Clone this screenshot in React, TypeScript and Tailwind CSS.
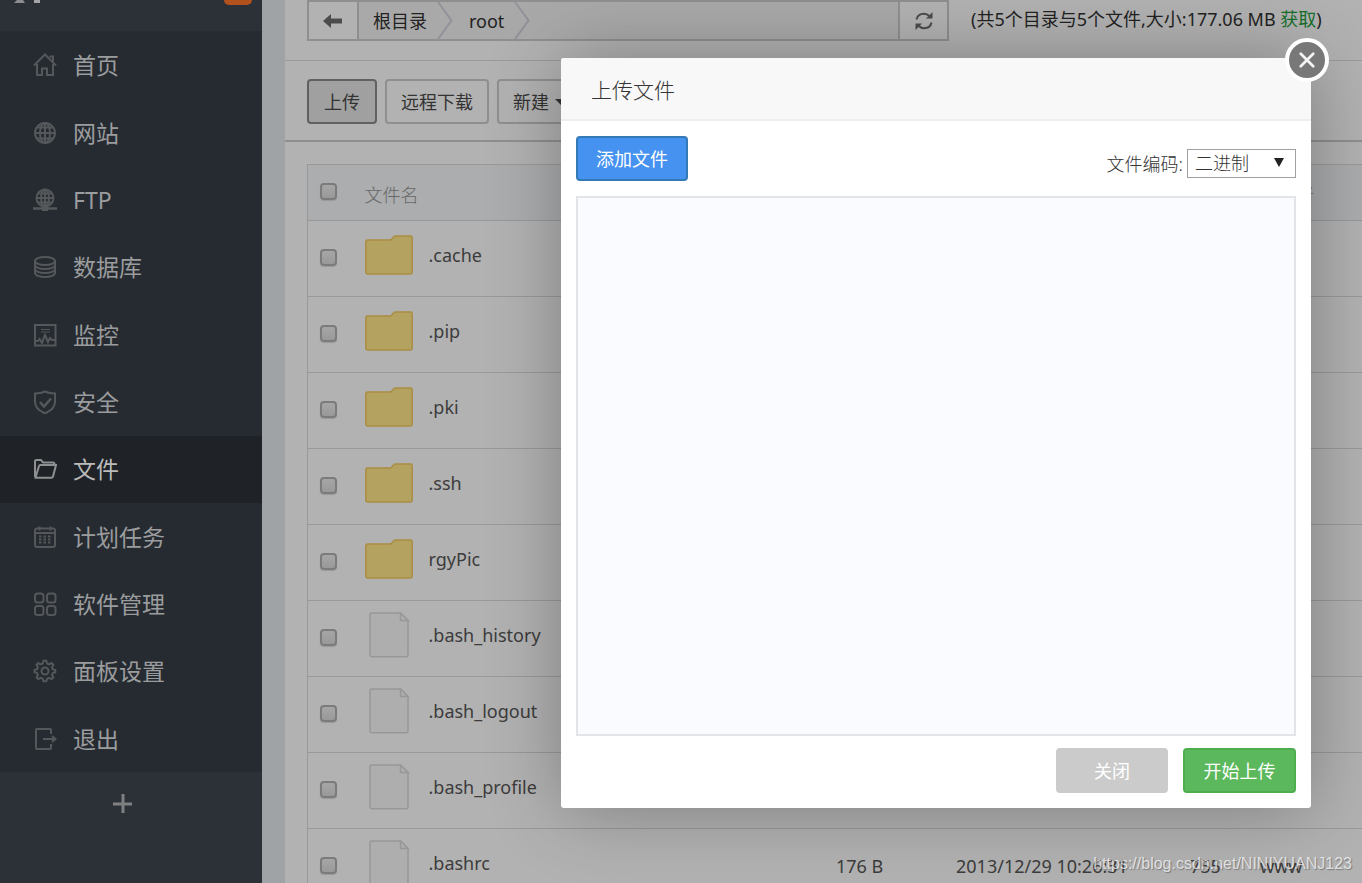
import React from "react";

const icons: Record<string, React.ReactNode> = {
  home: (
    <>
      <path d="M1 12.500 12 1.500l11 11" />
      <path d="M16.500 3.500h3.500v5" />
      <path d="M4 11v11h5v-6.500h5V22h6V11" />
    </>
  ),
  globe: (
    <>
      <circle cx="12" cy="12" r="10" />
      <ellipse cx="12" cy="12" rx="5" ry="10" />
      <path d="M12 2v20M2 12h20M4 6.500h16M4 17.500h16" />
    </>
  ),
  ftp: (
    <>
      <circle cx="12" cy="10" r="8.500" />
      <ellipse cx="12" cy="10" rx="4" ry="8.500" />
      <path d="M12 1.500v17M3.500 10h17M5 5.500h14M5 14.500h14" />
      <path d="M0 20.500h24" strokeWidth="2.500" />
      <path d="M9 20.500h6" strokeWidth="5" />
    </>
  ),
  database: (
    <>
      <ellipse cx="12" cy="6" rx="10" ry="4" />
      <path d="M2 6v12c0 2.200 4.500 4 10 4s10-1.800 10-4V6" />
      <path d="M2 10c0 2.200 4.500 4 10 4s10-1.800 10-4M2 14c0 2.200 4.500 4 10 4s10-1.800 10-4" />
    </>
  ),
  monitor: (
    <>
      <path d="M2 2h20.500v20.500H2z" />
      <path d="M8 6.500h9M8 9h9" strokeWidth="1" />
      <path d="M2 18h3l1.500-2L9 20l3-8 3 7 2-4 2 2h3" />
    </>
  ),
  shield: (
    <>
      <path d="M12 1.500C9 3 5.500 3.500 2 3.500V12c0 5.500 4.500 9 10 11.500C17.500 21 22 17.500 22 12V3.500c-3.500 0-7-.5-10-2z" />
      <path d="m7 12 4 4.500 7-8" strokeWidth="2.500" />
    </>
  ),
  folder: (
    <>
      <path d="M2 20V4.500C2 3.500 2.500 3 3.500 3H8l2 2.500h10c1 0 1.500.5 1.500 1.500v1" />
      <path d="M2.500 20.500 6 9c.2-.8.600-1 1.500-1H23l-3 11.500c-.2.800-.7 1.200-1.500 1.200h-16z" />
    </>
  ),
  calendar: (
    <>
      <rect x="2" y="3.500" width="20" height="18.500" rx="2" />
      <path d="M2 8h20M6.500 1.500v4M17.500 1.500v4" />
      <path d="M6 11.500h13M6 14.500h13M6 17.500h13" strokeDasharray="2.500 2" />
    </>
  ),
  grid: (
    <>
      <rect x="2" y="1.500" width="8.500" height="9" rx="2.500" />
      <rect x="14" y="1.500" width="8.500" height="9" rx="2.500" />
      <rect x="2" y="14" width="8.500" height="9" rx="2.500" />
      <rect x="14" y="14" width="8.500" height="9" rx="2.500" />
    </>
  ),
  gear: (
    <>
      <circle cx="12" cy="12" r="3.500" />
      <path d="m10.500 1.800-.8 2.700-2 .8-2.500-1.300-1.600 1.700 1.300 2.500-.8 2-2.500.8v2.200l2.500.8.8 2-1.300 2.500 1.600 1.600 2.500-1.200 2 .8.8 2.600h2.800l.8-2.600 2-.8 2.500 1.200 1.700-1.600-1.300-2.500.8-2 2.500-.8v-2.200l-2.500-.8-.8-2 1.300-2.500-1.700-1.700-2.500 1.300-2-.8-.8-2.700z" />
    </>
  ),
  exit: (
    <path d="M18 7V3c0-.7-.3-1-1-1H4c-.7 0-1 .3-1 1v18c0 .7.300 1 1 1h13c.7 0 1-.3 1-1v-4M10 12h12M19 9l3.500 3-3.500 3" />
  ),
};

const menu = [
  { icon: "home", label: "首页" },
  { icon: "globe", label: "网站" },
  { icon: "ftp", label: "FTP" },
  { icon: "database", label: "数据库" },
  { icon: "monitor", label: "监控" },
  { icon: "shield", label: "安全" },
  { icon: "folder", label: "文件", active: true },
  { icon: "calendar", label: "计划任务" },
  { icon: "grid", label: "软件管理" },
  { icon: "gear", label: "面板设置" },
  { icon: "exit", label: "退出" },
];

const files = [
  { name: ".cache", dir: true },
  { name: ".pip", dir: true },
  { name: ".pki", dir: true },
  { name: ".ssh", dir: true },
  { name: "rgyPic", dir: true },
  { name: ".bash_history" },
  { name: ".bash_logout" },
  { name: ".bash_profile" },
  {
    name: ".bashrc",
    size: "176 B",
    time: "2013/12/29 10:26:31",
    mode: "755",
    owner: "www",
  },
];

const FolderIcon = () => (
  <svg width="48" height="40" viewBox="0 0 48 40" aria-hidden="true">
    <path
      d="M2.500 5H25c2 0 3-4 5.500-4H45.500c1 0 1.700.7 1.700 1.700V37.300c0 1-.7 1.700-1.700 1.700H2.500C1.500 39 .8 38.300.8 37.300V6.700C.8 5.700 1.500 5 2.500 5z"
      fill="#b3a260"
      stroke="#ab8d43"
      strokeWidth="1.500"
    />
  </svg>
);

const FileIcon = () => (
  <svg width="48" height="46" viewBox="0 0 48 46" aria-hidden="true">
    <g fill="#aeaeae" stroke="#989898" strokeWidth="1.500">
      <path d="M6.500 1H35.500l7.500 7.500V43c0 1-.6 1.700-1.600 1.700H6.500C5.500 44.700 5 44 5 43V2.600C5 1.600 5.500 1 6.500 1z" />
      <path d="M35.500 1v7.500H43z" />
    </g>
  </svg>
);

const Check = ({ label }: { label: string }) => (
  <input
    type="checkbox"
    aria-label={label}
    className="block size-[17px] appearance-none rounded-[4px] border-2 border-[#7b7b7b] bg-linear-to-b from-[#a6a6a6] to-[#999999] shadow-[0_1px_1px_#999]"
  />
);

const Chevron = () => (
  <svg width="16" height="37" viewBox="0 0 16 37" fill="none" aria-hidden="true">
    <path d="M1 0l13.500 18.500L1 37" stroke="#92929a" strokeWidth="2" />
  </svg>
);

const Sidebar = () => {
  return (
    <aside className="w-[262px] shrink-0 bg-[#2c3037]">
      <div className="flex h-[31px] items-start justify-between pl-3.5 pr-2.5">
        <svg width="28" height="3" viewBox="0 0 28 3" aria-hidden="true">
          <path d="M3 0h6l2 3H0z" fill="#8b8d90" />
          <path d="M20 0h6v3h-6z" fill="#a5a6a8" />
        </svg>
        <span className="h-[5px] w-7 rounded-b-lg bg-[#b3511d]" />
      </div>
      <ul className="flex h-[741px] flex-col bg-[#262b31]">
        {menu.map((item) => (
          <li key={item.label} className="flex flex-1">
            <a
              href="#"
              className={
                item.active
                  ? "mt-px flex flex-1 items-center gap-4 bg-[#1f2226] pl-[33px] text-[23px] text-[#bbbbbb]"
                  : "mt-px flex flex-1 items-center gap-4 pl-[33px] text-[23px] text-[#9b9c9e]"
              }
            >
              <svg
                width="24"
                height="24"
                viewBox="0 0 24 24"
                fill="none"
                stroke={item.active ? "#8e9091" : "#54585b"}
                strokeWidth="2"
                aria-hidden="true"
              >
                {icons[item.icon]}
              </svg>
              {item.label}
            </a>
          </li>
        ))}
      </ul>
      <button
        type="button"
        aria-label="添加"
        className="flex h-16 w-full items-center justify-center pr-4"
      >
        <svg width="20" height="20" viewBox="0 0 20 20" aria-hidden="true">
          <path d="M10 0v19M0 10h19" stroke="#7f8081" strokeWidth="3" />
        </svg>
      </button>
    </aside>
  );
};

const PathBar = () => {
  return (
    <div className="flex h-[61px] items-start border-b border-[#999999] pl-[22px]">
      <div className="flex h-[41px] w-[642px] border-2 border-[#8f8f8f]">
        <button
          type="button"
          aria-label="返回"
          className="flex w-[50px] items-center justify-center border-r-2 border-[#8f8f8f]"
        >
          <svg width="20" height="14" viewBox="0 0 20 14" aria-hidden="true">
            <path d="M8 0v4.500h11v5H8V14L0 7z" fill="#4c4c4c" />
          </svg>
        </button>
        <nav className="flex flex-1 items-center bg-[#a9a9a9] pl-3.5 text-[#222222]">
          <a href="#" className="mr-2.5">
            根目录
          </a>
          <Chevron />
          <a href="#" className="ml-4 mr-2.5">
            root
          </a>
          <Chevron />
        </nav>
        <button
          type="button"
          aria-label="刷新"
          className="flex w-[49px] items-center justify-center border-l-2 border-[#8f8f8f]"
        >
          <svg width="18" height="18" viewBox="0 0 18 18" fill="none" aria-hidden="true">
            <path
              d="M1.500 7.500C2.200 4 5 1.800 9 1.800c2.200 0 4 .9 5.500 2.400M16.500 10.500c-.7 3.500-3.500 5.700-7.500 5.700-2.200 0-4-.9-5.500-2.400"
              stroke="#4c4c4c"
              strokeWidth="2"
            />
            <path d="M17.500 0v6.500H11zM.5 18v-6.500H7z" fill="#4c4c4c" />
          </svg>
        </button>
      </div>
      <p className="ml-[22px] mt-1.5 whitespace-nowrap text-[#222222]">
        (共5个目录与5个文件,大小:177.06 MB{" "}
        <a href="#" className="text-[#166e2c]">
          获取
        </a>
        )
      </p>
    </div>
  );
};

const Toolbar = () => {
  return (
    <div className="flex h-[81px] gap-2 border-b-2 border-[#8f8f8f] pl-[22px] pt-[18px] text-[#333333]">
      <button
        type="button"
        className="h-[45px] shrink-0 rounded-[4px] border-2 border-[#616161] bg-[#a0a0a0] px-[15px]"
      >
        上传
      </button>
      <button
        type="button"
        className="h-[45px] shrink-0 rounded-[4px] border-2 border-[#8f8f8f] px-3.5"
      >
        远程下载
      </button>
      <button
        type="button"
        className="flex h-[45px] shrink-0 items-center gap-1.5 rounded-[4px] border-2 border-[#8f8f8f] px-3.5"
      >
        新建
        <svg width="12" height="6" viewBox="0 0 12 6" aria-hidden="true">
          <path d="M0 0h12L6 6z" fill="#333333" />
        </svg>
      </button>
    </div>
  );
};

const FileTable = () => {
  return (
    <div className="pl-[22px] pt-[22px]">
      <table className="w-full table-fixed border-collapse border-l border-t border-[#999999] text-left text-[#3c3c3c]">
        <colgroup>
          <col className="w-[57px]" />
          <col />
          <col className="w-[120px]" />
          <col className="w-[234px]" />
          <col className="w-[70px]" />
          <col className="w-[102px]" />
        </colgroup>
        <thead>
          <tr className="h-14 border-b border-[#95999d] bg-[#abadaf] text-[#666666]">
            <th className="pb-0.5 pl-3 font-light">
              <Check label="全选" />
            </th>
            <th className="pt-1 font-light">文件名</th>
            <th className="pt-1 font-light">大小</th>
            <th className="pt-1 font-light">修改时间</th>
            <th className="pt-1 font-light">权限</th>
            <th className="pt-1 font-light">所有者</th>
          </tr>
        </thead>
        <tbody>
          {files.map((file) => (
            <tr key={file.name} className="h-[76px] border-b border-[#999999]">
              <td className="pb-0.5 pl-3">
                <Check label={file.name} />
              </td>
              <td className="pb-2">
                <div className="flex items-center gap-4">
                  {file.dir ? <FolderIcon /> : <FileIcon />}
                  <a href="#">{file.name}</a>
                </div>
              </td>
              <td className="pb-0.5">{file.size}</td>
              <td className="pb-0.5">{file.time}</td>
              <td className="pb-0.5">{file.mode}</td>
              <td className="pb-0.5">{file.owner}</td>
            </tr>
          ))}
        </tbody>
      </table>
    </div>
  );
};

const UploadDialog = () => {
  return (
    <section
      role="dialog"
      aria-label="上传文件"
      className="absolute right-[51px] top-[58px] w-[750px] rounded-[3px] bg-white text-[#333333] shadow-[1px_1px_75px_rgba(0,0,0,0.3)]"
    >
      <h2 className="rounded-t-[3px] border-b-2 border-[#eeeeee] bg-[#f8f8f8] px-[30px] pb-3.5 pt-[18px] text-[21px] leading-[29px] font-light">
        上传文件
      </h2>
      <button
        type="button"
        aria-label="关闭窗口"
        className="absolute -right-[18px] -top-[20px] flex size-11 items-center justify-center rounded-full border-4 border-white bg-[#787878]"
      >
        <svg width="16" height="16" viewBox="0 0 18 18" aria-hidden="true">
          <path
            d="M2 2l14 14M16 2L2 16"
            stroke="#f4f4f4"
            strokeWidth="3"
            strokeLinecap="round"
          />
        </svg>
      </button>
      <div className="p-[15px]">
        <div className="flex items-center justify-between">
          <button
            type="button"
            className="h-[45px] w-28 rounded-[4px] border-2 border-[#337ab7] bg-[#4592f0] text-white"
          >
            添加文件
          </button>
          <div className="flex items-center gap-1 pt-2.5">
            <label htmlFor="encoding" className="font-light">
              文件编码:
            </label>
            <div className="relative">
              <select
                id="encoding"
                className="block h-[29px] w-[109px] appearance-none border border-[#a0a0a0] bg-white pl-[7px] leading-[27px] font-light"
              >
                <option>二进制</option>
              </select>
              <svg
                width="10"
                height="10"
                viewBox="0 0 10 10"
                className="pointer-events-none absolute right-3 top-[9px]"
                aria-hidden="true"
              >
                <path d="M0 0h10L5 9z" fill="#222222" />
              </svg>
            </div>
          </div>
        </div>
        <div className="mt-[15px] h-[540px] border-2 border-[#e2e4e8] bg-[#fafbff]" />
        <div className="mt-3 flex justify-end gap-[15px] text-white">
          <button type="button" className="h-[45px] w-28 rounded-[4px] bg-[#cbcbcb]">
            关闭
          </button>
          <button
            type="button"
            className="h-[45px] w-[113px] rounded-[4px] border-2 border-[#4cae4c] bg-[#5cb85c]"
          >
            开始上传
          </button>
        </div>
      </div>
    </section>
  );
};

const App = () => {
  return (
    <div className="relative flex h-screen overflow-hidden bg-[#9fa3a6] font-['Noto_Sans','Noto_Sans_CJK_SC',sans-serif] text-[18px] leading-[26px]">
      <Sidebar />
      <main className="ml-[23px] min-w-0 flex-1 bg-[#b2b2b2]">
        <PathBar />
        <Toolbar />
        <FileTable />
      </main>
      <UploadDialog />
      <p className="absolute bottom-1.5 right-2.5 font-['Liberation_Sans',sans-serif] text-[16px] text-white/70 [text-shadow:1px_1px_1px_rgba(0,0,0,0.3)]">
        https://blog.csdn.net/NINIYUANJ123
      </p>
    </div>
  );
};

export default App;
